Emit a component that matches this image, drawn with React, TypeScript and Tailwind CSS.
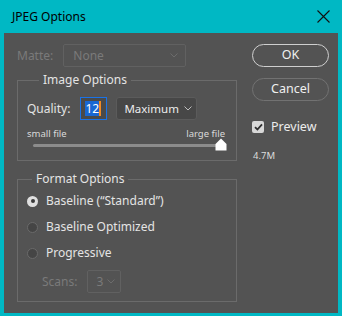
import React from 'react';

function Chevron({ className = '' }: { className?: string }) {
  return (
    <svg width="8" height="5" viewBox="0 0 8 5" className={className}>
      <path d="M0.5 0.5 L4 4 L7.5 0.5" fill="none" stroke="currentColor" strokeWidth="1" />
    </svg>
  );
}

function Radio({ checked, label }: { checked?: boolean; label: string }) {
  return (
    <div className="flex h-[26px] items-center">
      <span className={`ml-[9px] flex h-[11px] w-[11px] items-center justify-center rounded-full ${checked ? 'bg-[#e0e0e0]' : 'border border-[#6a6a6a] bg-[#454545]'}`}>
        {checked && <span className="h-[4px] w-[4px] rounded-full bg-[#3a3a3a]" />}
      </span>
      <span className="ml-[8px] text-[12px] text-[#e4e4e4]">{label}</span>
    </div>
  );
}

export default function App() {
  return (
    <div className="flex h-[316px] w-[342px] flex-col bg-[#00b8c4] font-['Noto_Sans','Open_Sans',sans-serif]">
      <div className="flex h-[33px] shrink-0 items-center justify-between pl-[12px] pr-[12px]">
        <span className="text-[12px] text-black">JPEG Options</span>
        <svg width="13" height="13" viewBox="0 0 13 13">
          <path d="M0.5 0.5 L12.5 12.5 M12.5 0.5 L0.5 12.5" stroke="#111" strokeWidth="1.1" />
        </svg>
      </div>
      <div className="mx-[4px] mb-[3px] flex flex-1 bg-[#535353] pl-[13px] pt-[11px]">
        <div className="w-[220px]">
          <div className="flex h-[23px] items-center">
            <span className="text-[12px] text-[#7a7a7a]">Matte:</span>
            <div className="ml-[10px] flex h-[23px] w-[123px] items-center justify-between rounded-[2px] border border-[#616161] pl-[9px] pr-[7px] text-[12px] text-[#7a7a7a]">
              <span>None</span>
              <Chevron className="text-[#6c6c6c]" />
            </div>
          </div>
          <fieldset className="mt-[4px] h-[90px] border border-[#6b6b6b] px-[9px]">
            <legend className="ml-[12px] px-[4px] text-[12px] leading-[18px] text-[#e4e4e4]">Image Options</legend>
            <div className="mt-[8px] flex h-[23px] items-center">
              <span className="text-[12px] text-[#e4e4e4]">Quality:</span>
              <div className="ml-[10px] flex h-[23px] w-[27px] items-center border border-[#1a73e8] bg-[#4a4a4a] pl-[4px]">
                <span className="bg-[#1967d2] text-[12px] leading-[15px] text-white">12</span>
                <span className="h-[15px] w-[2px] bg-[#f08a24]" />
              </div>
              <div className="ml-[9px] flex h-[23px] w-[81px] items-center rounded-[3px] border border-[#5b5b5b] bg-[#474747] pl-[7px] text-[11.5px] text-[#ececec]">
                <span>Maximum</span>
                <Chevron className="ml-[5px] text-[#bdbdbd]" />
              </div>
            </div>
            <div className="mt-[7px] flex justify-between pr-[2px] text-[9.5px] leading-[14px] text-[#dadada]">
              <span>small file</span>
              <span>large file</span>
            </div>
            <div className="relative ml-[6px] mt-[3px] h-[3px] w-[188px] rounded bg-[#8c8c8c]">
              <svg width="12" height="13" viewBox="0 0 12 13" className="absolute right-[-6px] top-[-6px]">
                <path d="M6 0.5 L11.5 6 L11.5 12.5 L0.5 12.5 L0.5 6 Z" fill="#ffffff" />
              </svg>
            </div>
          </fieldset>
          <fieldset className="mt-[9px] h-[132px] border border-[#6b6b6b]">
            <legend className="ml-[14px] px-[4px] text-[12px] leading-[18px] text-[#e4e4e4]">Format Options</legend>
            <div>
              <Radio checked label={'Baseline (\u201cStandard\u201d)'} />
              <Radio label="Baseline Optimized" />
              <Radio label="Progressive" />
              <div className="mt-[4px] flex h-[23px] items-center pl-[24px]">
                <span className="text-[12px] text-[#7a7a7a]">Scans:</span>
                <div className="ml-[10px] flex h-[23px] w-[34px] items-center justify-between rounded-[2px] border border-[#616161] pl-[8px] pr-[5px] text-[12px] text-[#7a7a7a]">
                  <span>3</span>
                  <Chevron className="text-[#6c6c6c]" />
                </div>
              </div>
            </div>
          </fieldset>
        </div>
        <div className="ml-[15px] w-[77px]">
          <div className="flex h-[23px] items-center justify-center rounded-full border-[1.5px] border-[#cfcfcf] text-[12.5px] text-[#f0f0f0]">OK</div>
          <div className="mt-[11px] flex h-[23px] items-center justify-center rounded-full border-[1.5px] border-[#727272] text-[12.5px] text-[#f0f0f0]">Cancel</div>
          <div className="mt-[17px] flex items-center">
            <span className="flex h-[12px] w-[12px] items-center justify-center rounded-[2px] bg-[#d8d8d8]">
              <svg width="9" height="8" viewBox="0 0 9 8">
                <path d="M1 4.2 L3.4 6.5 L8 1.3" fill="none" stroke="#2f2f2f" strokeWidth="1.8" />
              </svg>
            </span>
            <span className="ml-[7px] text-[12.5px] text-[#ececec]">Preview</span>
          </div>
          <div className="ml-[1px] mt-[12px] text-[9.5px] text-[#dcdcdc]">4.7M</div>
        </div>
      </div>
    </div>
  );
}
